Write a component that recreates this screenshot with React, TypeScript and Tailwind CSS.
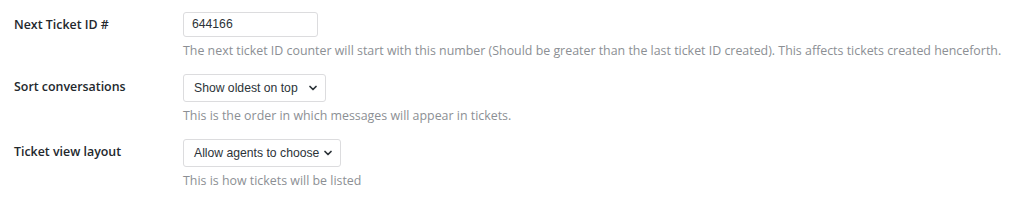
import { ChevronDown } from 'lucide-react';

const UI = { fontFamily: '"Open Sans", "Noto Sans", sans-serif' };
const CTRL = { fontFamily: '"Liberation Sans", Arial, sans-serif' };

function Row({ label, children, help }: { label: string; children: React.ReactNode; help: string }) {
  return (
    <div className="flex">
      <div className="flex w-[183px] shrink-0 items-start pl-[14px]">
        <span className="whitespace-nowrap text-[12.4px] font-semibold leading-[26px] text-[#23282d]">{label}</span>
      </div>
      <div className="flex flex-col items-start">
        {children}
        <p className="mt-[5px] whitespace-nowrap text-[12.4px] leading-[18px] text-[#8c8f94]">{help}</p>
      </div>
    </div>
  );
}

function Select({ value, width }: { value: string; width: string }) {
  return (
    <div
      className={`flex h-[28px] ${width} items-center justify-between rounded-[3px] border border-[#dcdcde] bg-white pl-[10px] pr-[6px] text-[12.2px] text-[#2c3338]`}
      style={CTRL}
    >
      <span className="whitespace-nowrap">{value}</span>
      <ChevronDown className="h-[12px] w-[12px] shrink-0" strokeWidth={3.5} />
    </div>
  );
}

export default function App() {
  return (
    <div className="h-[204px] w-[1024px] bg-white" style={UI}>
      <div className="flex flex-col gap-[14px] pt-[12px]">
        <Row
          label="Next Ticket ID #"
          help="The next ticket ID counter will start with this number (Should be greater than the last ticket ID created). This affects tickets created henceforth."
        >
          <div
            className="flex h-[25px] w-[135px] items-center rounded-[3px] border border-[#dcdcde] bg-white px-[8px] text-[12.2px] text-[#2c3338]"
            style={CTRL}
          >
            644166
          </div>
        </Row>
        <Row label="Sort conversations" help="This is the order in which messages will appear in tickets.">
          <Select value="Show oldest on top" width="w-[143px]" />
        </Row>
        <Row label="Ticket view layout" help="This is how tickets will be listed">
          <Select value="Allow agents to choose" width="w-[158px]" />
        </Row>
      </div>
    </div>
  );
}
